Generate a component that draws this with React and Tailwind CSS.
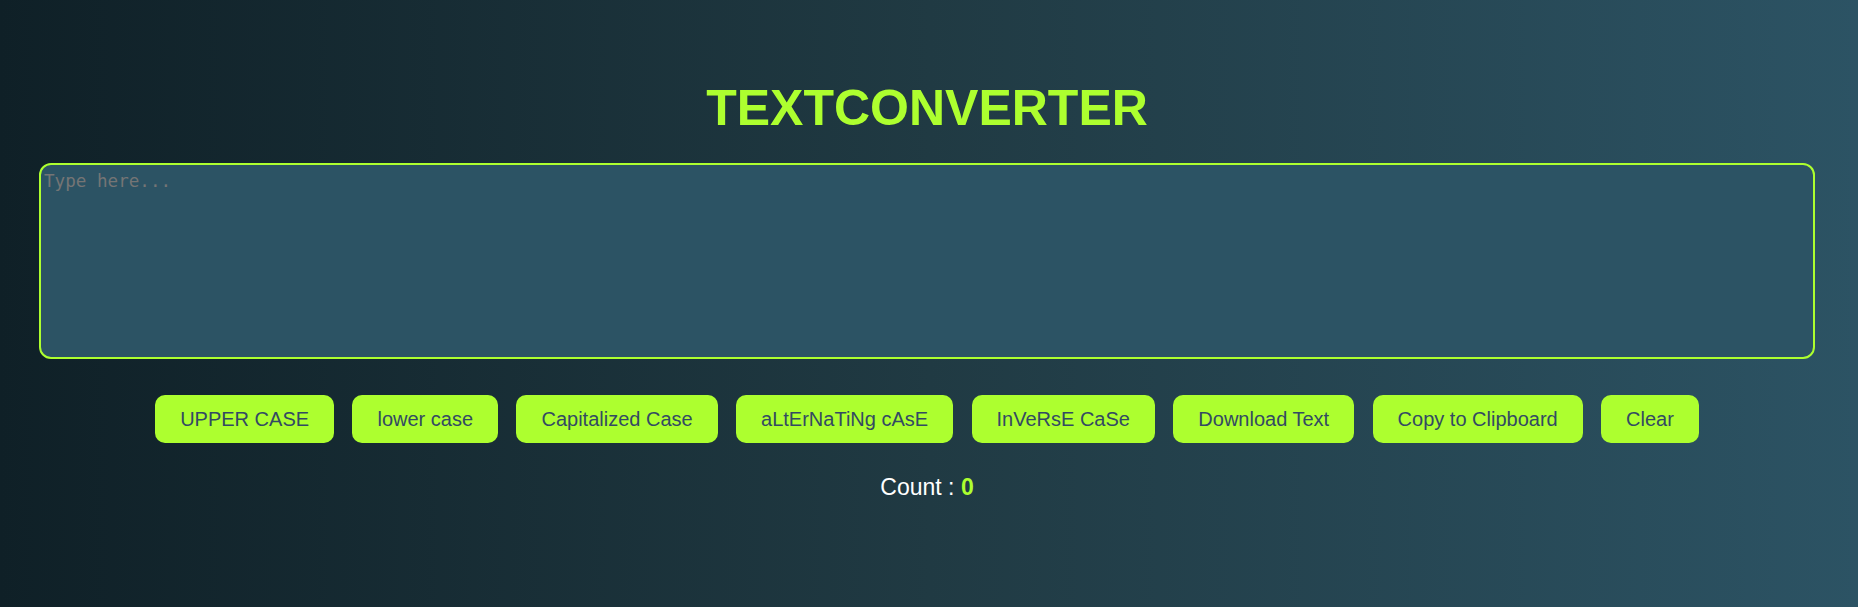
import React, { useState } from "react";

const buttons = [
  "UPPER CASE",
  "lower case",
  "Capitalized Case",
  "aLtErNaTiNg cAsE",
  "InVeRsE CaSe",
  "Download Text",
  "Copy to Clipboard",
  "Clear",
];

export default function App() {
  const [text, setText] = useState("");
  const count = text.length;
  return (
    <div className="min-h-[607px] w-full bg-linear-to-r from-[#0f2027] via-[#203a43] to-[#2c5364] font-['Liberation_Sans',Arial,sans-serif]">
      <div className="flex flex-col items-center pl-[39px] pr-[43px] pt-[80px]">
        <h1 className="text-[50px] leading-[57px] font-bold text-[#adff2f]">
          TEXTCONVERTER
        </h1>
        <textarea
          value={text}
          onChange={(e) => setText(e.target.value)}
          placeholder="Type here..."
          className="mt-[26px] h-[196px] w-full resize-none rounded-[12px] border-2 border-[#adff2f] bg-[#2c5364] p-[3px] font-['DejaVu_Sans_Mono',monospace] text-[17.6px] text-white outline-none placeholder:text-[#757575]"
        />
        <div className="mt-[36px] flex flex-wrap justify-center gap-[18.4px]">
          {buttons.map((b) => (
            <button
              key={b}
              className="h-[48px] rounded-[10px] bg-[#adff2f] px-[25px] text-[20px] leading-[23px] text-[#334a63]"
            >
              {b}
            </button>
          ))}
        </div>
        <p className="mt-[31px] text-[23px] leading-[26px] text-white">
          Count : <span className="font-bold text-[#adff2f]">{count}</span>
        </p>
      </div>
    </div>
  );
}
